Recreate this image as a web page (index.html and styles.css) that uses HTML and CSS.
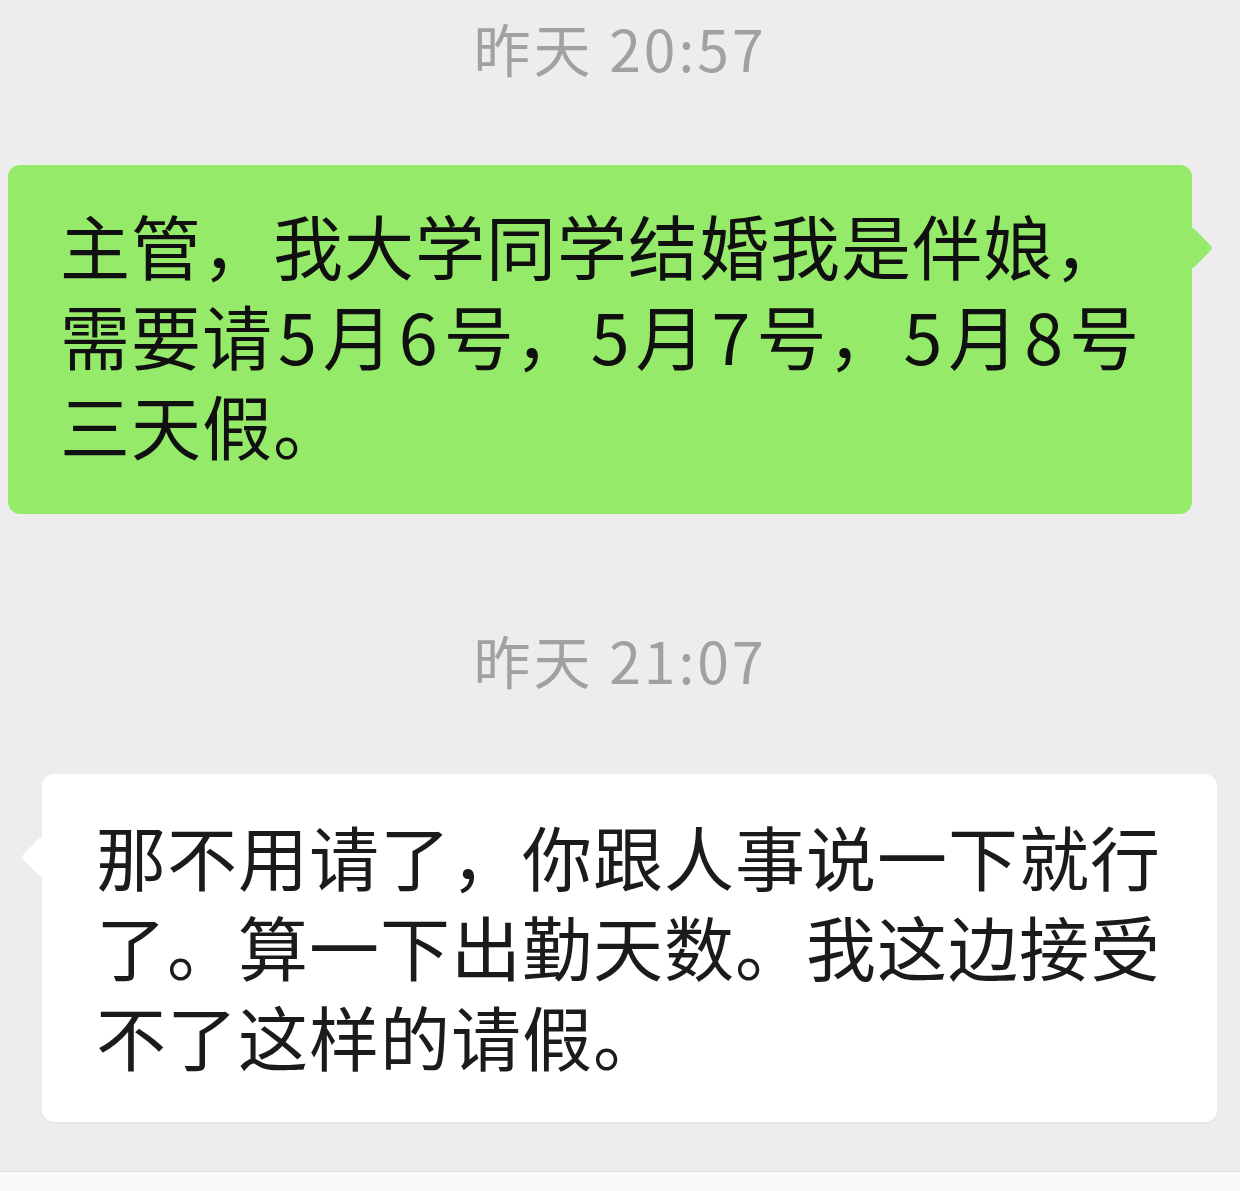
FILE: index.html
```html
<!DOCTYPE html>
<html>
<head>
<meta charset="utf-8"/>
<title>聊天记录</title>
<link rel="stylesheet" href="styles.css">
</head>
<body>
<div class="chat">
  <div class="time time-first">昨天 20:57</div>

  <div class="bubble bubble-me">
    主管，我大学同学结婚我是伴娘，<br>
    需要请<span class="num">5</span>月<span class="num">6</span>号，<span class="num">5</span>月<span class="num">7</span>号，<span class="num">5</span>月<span class="num">8</span>号<br>
    三天假。
  </div>

  <div class="time time-second">昨天 21:07</div>

  <div class="bubble bubble-them">
    那不用请了，你跟人事说一下就行<br>
    了。算一下出勤天数。我这边接受<br>
    不了这样的请假。
  </div>
</div>
<div class="input-bar"></div>
</body>
</html>
```

FILE: styles.css
```css
body {
   margin: 0;
   background-color: #ededed;
   font-family: "Noto Sans CJK SC", "Noto Sans", sans-serif;
}

.chat {
   display: flex;
   flex-direction: column;
   align-items: flex-start;
   height: 1171px;
}

.time {
   align-self: center;
   color: #a1a1a1;
   font-size: 57px;
   line-height: 94px;
   letter-spacing: 3px;
}

.time-first {
   margin-bottom: 71px;
}

.time-second {
   margin-top: 98px;
   margin-bottom: 68px;
}

.bubble {
   position: relative;
   box-sizing: border-box;
   font-size: 70px;
   line-height: 90px;
   letter-spacing: 1px;
   border-radius: 12px;
}

.bubble::after {
   content: "";
   position: absolute;
   top: 68px;
   width: 30px;
   height: 30px;
   border-radius: 4px;
   transform: rotate(45deg);
}

/* iOS puts a little air round latin digits inside chinese text */
.num {
   padding: 0 5px;
}

.bubble-me {
   margin-left: 8px;
   width: 1184px;
   padding: 35px 20px 44px 52px;
   background-color: #95ea6a;
   color: #101010;
}

.bubble-me::after {
   right: -15px;
   background-color: #95ea6a;
}

.bubble-them {
   margin-left: 42px;
   width: 1175px;
   padding: 37px 20px 41px 54px;
   background-color: #ffffff;
   color: #1b1b1b;
   box-shadow: 0 1px 2px rgba(0, 0, 0, 0.05);
}

.bubble-them::after {
   left: -15px;
   background-color: #ffffff;
}

.input-bar {
   height: 20px;
   border-top: 1px solid #dcdcdc;
   background-color: #fafafa;
}
```
